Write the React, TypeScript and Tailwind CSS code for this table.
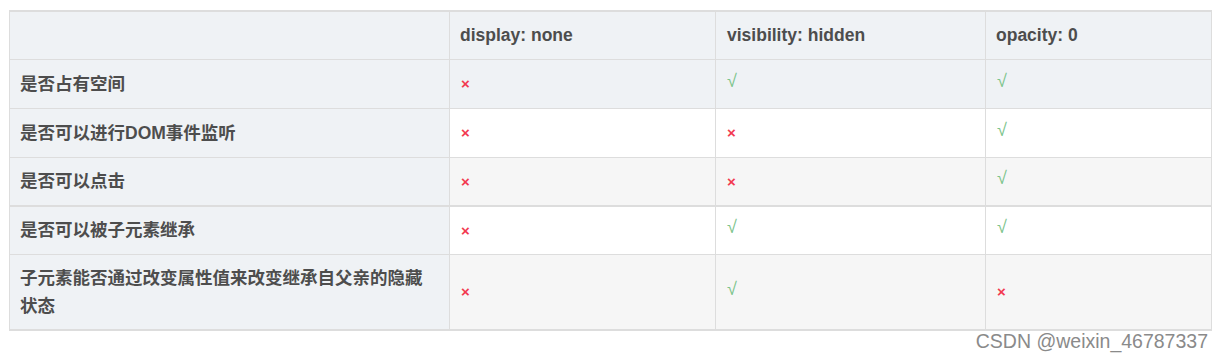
import React from "react";

type Mark = "x" | "v";

const rows: { label: string[]; vals: Mark[]; bg: string; h: string; thickBottom?: boolean }[] = [
  { label: ["是否占有空间"], vals: ["x", "v", "v"], bg: "bg-[#eff2f5]", h: "h-[49px]" },
  { label: ["是否可以进行DOM事件监听"], vals: ["x", "x", "v"], bg: "bg-white", h: "h-[49px]" },
  { label: ["是否可以点击"], vals: ["x", "x", "v"], bg: "bg-[#f6f6f6]", h: "h-[49px]", thickBottom: true },
  { label: ["是否可以被子元素继承"], vals: ["x", "v", "v"], bg: "bg-white", h: "h-[48px]" },
  {
    label: ["子元素能否通过改变属性值来改变继承自父亲的隐藏", "状态"],
    vals: ["x", "v", "x"],
    bg: "bg-[#f6f6f6]",
    h: "h-[76px]",
  },
];

function MarkCell({ m }: { m: Mark }) {
  if (m === "x") {
    return <span className="text-[15px] font-bold text-[#f23a4f]">×</span>;
  }
  return <span className="relative top-[-3px] text-[18px] font-normal text-[#7cc48a]">√</span>;
}

export default function App() {
  return (
    <div
      className="relative h-[358px] w-[1223px] bg-white pl-[9px] pt-[10px]"
      style={{ fontFamily: '"Liberation Sans", "Noto Sans CJK SC", sans-serif' }}
    >
      <table className="w-[1202px] table-fixed border-collapse border-x border-y-2 border-[#dddddd] text-[17.5px] font-bold leading-[28px] text-[#4d4d4d]">
        <colgroup>
          <col className="w-[440px]" />
          <col className="w-[266px]" />
          <col className="w-[270px]" />
          <col className="w-[226px]" />
        </colgroup>
        <thead>
          <tr className="h-[48px] bg-[#eff2f5]">
            <th className="border border-[#dddddd] px-[10px] py-0 text-left font-bold"></th>
            <th className="border border-[#dddddd] px-[10px] py-0 text-left font-bold">display: none</th>
            <th className="border border-[#dddddd] px-[11px] py-0 text-left font-bold">visibility: hidden</th>
            <th className="border border-[#dddddd] px-[10px] py-0 text-left font-bold">opacity: 0</th>
          </tr>
        </thead>
        <tbody>
          {rows.map((r, i) => (
            <tr
              key={i}
              className={`${r.bg} ${r.h} ${r.thickBottom ? "border-b-2 border-[#dddddd]" : ""}`}
            >
              <td className="border border-[#dddddd] bg-[#eff2f5] px-[10px] py-0 align-middle">
                {r.label.map((l, j) => (
                  <div key={j}>{l}</div>
                ))}
              </td>
              {r.vals.map((v, j) => (
                <td key={j} className="border border-[#dddddd] px-[11px] py-0 align-middle">
                  <MarkCell m={v} />
                </td>
              ))}
            </tr>
          ))}
        </tbody>
      </table>
      <div
        className="absolute right-[15px] top-[329px] text-[19.5px] font-normal leading-[24px] text-[#8a8a8a]"
        style={{ textShadow: "0 0 1px #fff" }}
      >
        CSDN @weixin_46787337
      </div>
    </div>
  );
}
